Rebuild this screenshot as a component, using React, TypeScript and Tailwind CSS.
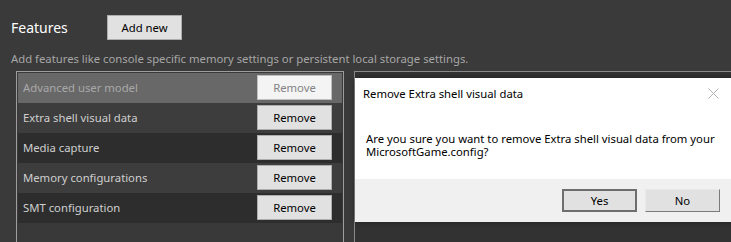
import React from 'react';

const features = [
  { name: 'Advanced user model', selected: true },
  { name: 'Extra shell visual data' },
  { name: 'Media capture' },
  { name: 'Memory configurations' },
  { name: 'SMT configuration' },
];

const rowBg = ['bg-[#686868]', 'bg-[#3d3d3d]', 'bg-[#2d2d2d]', 'bg-[#3d3d3d]', 'bg-[#2d2d2d]'];

export default function App() {
  return (
    <div className="relative w-[731px] h-[242px] overflow-hidden bg-[#3a3a3a] font-['Noto_Sans',sans-serif] text-[11.3px]">
      {/* header */}
      <div className="flex items-center pl-[11px] pt-[15px]">
        <h2 className="w-[96px] text-[14px] text-white leading-none">Features</h2>
        <button className="w-[75px] h-[25px] bg-[#e1e1e1] border border-[#adadad] text-black leading-none">
          Add new
        </button>
      </div>
      <p className="pl-[11px] mt-[12px] text-[#a6a6a6] leading-[14px]">
        Add features like console specific memory settings or persistent local storage settings.
      </p>

      <div className="flex gap-[10px] pl-[16px] mt-[5px]">
        {/* feature list */}
        <div className="w-[328px] h-[200px] shrink-0 border border-[#9d9d9d] bg-[#393939] p-px">
          {features.map((f, i) => (
            <div key={f.name} className={`flex items-center justify-between h-[30px] pl-[5px] pr-[10px] ${rowBg[i]}`}>
              <span className={f.selected ? 'text-[#a8a8a8]' : 'text-[#cfcfcf]'}>{f.name}</span>
              <button
                className={
                  f.selected
                    ? 'w-[75px] h-[25px] -mt-px bg-[#f4f4f4] border border-[#bfbfbf] text-[#838383] leading-none'
                    : 'w-[75px] h-[25px] -mt-px bg-[#e1e1e1] border border-[#adadad] text-black leading-none'
                }
              >
                Remove
              </button>
            </div>
          ))}
        </div>
        {/* second panel behind dialog */}
        <div className="flex-1 h-[200px] border border-[#8a8a8a] border-r-0 bg-[#323232]" />
      </div>

      {/* confirmation dialog */}
      <div className="absolute left-[355px] top-[78px] w-[380px] h-[144px] bg-white flex flex-col shadow-[0_0_6px_rgba(0,0,0,0.4)]">
        <div className="flex items-start justify-between pl-[8px] pr-[16px] pt-[9px]">
          <span className="text-black leading-[14px]">Remove Extra shell visual data</span>
          <svg width="11" height="11" viewBox="0 0 11 11" className="mt-[1px]">
            <path d="M0.5 0.5 L10.5 10.5 M10.5 0.5 L0.5 10.5" stroke="#b3b3b3" strokeWidth="1" />
          </svg>
        </div>
        <p className="pl-[11px] pr-[20px] mt-[31px] text-black leading-[13px]">
          Are you sure you want to remove Extra shell visual data from your MicrosoftGame.config?
        </p>
        <div className="mt-auto h-[43px] bg-[#f0f0f0] flex items-start pl-[207px] pt-[10px] gap-[8px]">
          <button className="w-[75px] h-[23px] bg-[#e1e1e1] border-2 border-[#6e6e6e] text-black leading-none">
            Yes
          </button>
          <button className="w-[75px] h-[23px] bg-[#e1e1e1] border border-[#adadad] border-t-[#e8e8e8] border-l-[#e8e8e8] border-b-[#7a7a7a] border-r-[#7a7a7a] text-black leading-none">
            No
          </button>
        </div>
      </div>
    </div>
  );
}
